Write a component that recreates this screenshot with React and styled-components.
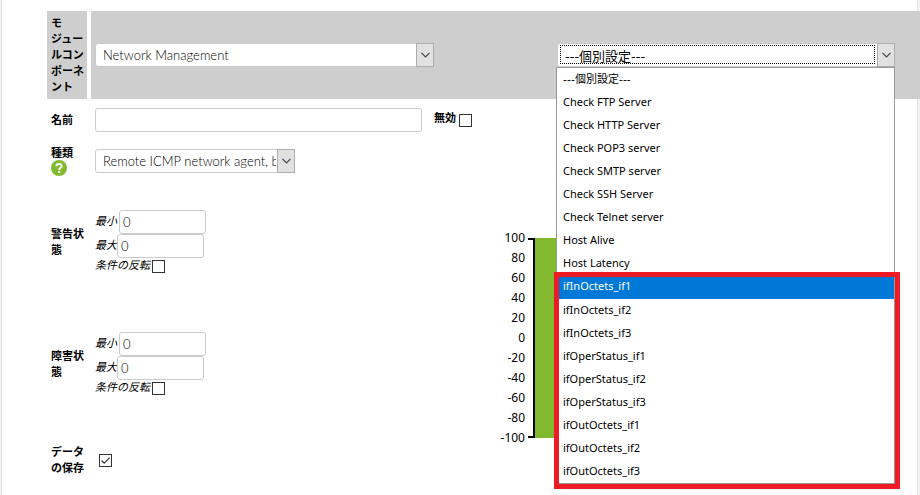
import React from 'react';
import styled, { createGlobalStyle } from 'styled-components'


const commonOptions = [
    '---個別設定---',
    'Check FTP Server',
    'Check HTTP Server',
    'Check POP3 server',
    'Check SMTP server',
    'Check SSH Server',
    'Check Telnet server',
    'Host Alive',
    'Host Latency',
]

const interfaceOptions = [
    'ifInOctets_if1',
    'ifInOctets_if2',
    'ifInOctets_if3',
    'ifOperStatus_if1',
    'ifOperStatus_if2',
    'ifOperStatus_if3',
    'ifOutOctets_if1',
    'ifOutOctets_if2',
    'ifOutOctets_if3',
]

const ticks = [100, 80, 60, 40, 20, 0, -20, -40, -60, -80, -100]

const SelectBox = ({ label, value, width, focused, ...rest }) =>{
    return(
        <SelectWrapper $width={width}>
            <Select aria-label={label} defaultValue={value} $focused={focused} {...rest}>
                <option>{value}</option>
            </Select>
            <SelectArrow>
                <svg width="9" height="6" viewBox="0 0 9 6" aria-hidden="true">
                    <path d="M0.5 0.8 L4.5 4.8 L8.5 0.8" fill="none" stroke="#444" strokeWidth="1.2" />
                </svg>
            </SelectArrow>
        </SelectWrapper>
    )
}

const ComponentList = () =>{
    return(
        <Options role="listbox" aria-label="個別設定">
            <OptionGroup role="group">
                {commonOptions.map((name, i) => (
                    <Option role="option" aria-selected={false} $placeholder={i === 0} key={name}>{name}</Option>
                ))}
            </OptionGroup>
            <OptionGroup role="group" $marked>
                {interfaceOptions.map((name, i) => (
                    <Option role="option" aria-selected={i === 0} $active={i === 0} key={name}>{name}</Option>
                ))}
            </OptionGroup>
        </Options>
    )
}

const Threshold = ({ id, title }) =>{
    return(
        <ThresholdRow>
            <Label as="div">{title}</Label>
            <ThresholdFields>
                <FieldLine $gap="2px">
                    <FieldLabel htmlFor={id + '-min'}>最小</FieldLabel>
                    <TextInput id={id + '-min'} $width="87px" defaultValue="0" />
                </FieldLine>
                <FieldLine>
                    <FieldLabel htmlFor={id + '-max'}>最大</FieldLabel>
                    <TextInput id={id + '-max'} $width="87px" defaultValue="0" />
                </FieldLine>
                <FieldLine $gap="2px" $short>
                    <FieldLabel htmlFor={id + '-inv'}>条件の反転</FieldLabel>
                    <Checkbox id={id + '-inv'} type="checkbox" />
                </FieldLine>
            </ThresholdFields>
        </ThresholdRow>
    )
}

const ThresholdChart = () =>{
    return(
        <Chart width="160" height="216" viewBox="0 0 160 216" role="img" aria-label="しきい値">
            <rect x="38" y="8" width="100" height="200" fill="#82b92e" />
            <path d="M31 9 H37 V207 H31" fill="none" stroke="#000" strokeWidth="2" />
            {ticks.map((tick, i) => (
                <text key={tick} x="28" y={12 + i * 20} textAnchor="end">{tick}</text>
            ))}
        </Chart>
    )
}

const App = () =>{
    return(
        <Page lang="ja">
            <GlobalStyle />
            <Panel>
                <Form>
                    <ComponentRow>
                        <Label as="div" $shaded>モジュールコンポーネント</Label>
                        <ComponentCell>
                            <SelectBox label="モジュールコンポーネント" value="Network Management" width="339px" />
                            <Dropdown>
                                <SelectBox label="個別設定" value="---個別設定---" width="338px" focused />
                                <ComponentList />
                            </Dropdown>
                        </ComponentCell>
                    </ComponentRow>
                    <Row $height="42px">
                        <Label htmlFor="name">名前</Label>
                        <Cell>
                            <TextInput id="name" $width="327px" />
                            <DisabledLabel htmlFor="disabled">無効</DisabledLabel>
                            <Checkbox id="disabled" type="checkbox" />
                        </Cell>
                    </Row>
                    <Row $height="40px">
                        <Label as="div">
                            種類
                            <HelpButton type="button" aria-label="ヘルプ">
                                <svg width="16" height="16" viewBox="0 0 16 16" aria-hidden="true">
                                    <circle cx="8" cy="8" r="8" fill="#82b92e" />
                                    <path d="M5.4 6.2 C5.4 3.4 10.7 3.3 10.7 6.1 C10.7 7.8 8.2 7.9 8.2 9.9" fill="none" stroke="#fff" strokeWidth="1.9" />
                                    <rect x="7.2" y="11" width="2" height="2" fill="#fff" />
                                </svg>
                            </HelpButton>
                        </Label>
                        <Cell>
                            <SelectBox label="種類" value="Remote ICMP network agent, boolean data" width="200px" />
                        </Cell>
                    </Row>
                    <Section>
                        <div>
                            <Threshold id="warning" title="警告状態" />
                            <Threshold id="critical" title="障害状態" />
                            <Row $height="70px">
                                <Label htmlFor="history">データの保存</Label>
                                <Cell $indent>
                                    <Checkbox id="history" type="checkbox" defaultChecked />
                                </Cell>
                            </Row>
                        </div>
                        <ThresholdChart />
                    </Section>
                </Form>
            </Panel>
        </Page>
    )
}

const GlobalStyle = createGlobalStyle`
    *, *::before, *::after {
        box-sizing: border-box;
    }
    body {
        margin: 0;
        background-color: #f4f4f4;
        color: #000;
        font-family: "Noto Sans", "Noto Sans CJK JP", sans-serif;
        font-size: 11px;
        line-height: 16px;
        overflow-x: hidden;
    }
    input, select, button {
        font-family: Lato, "Noto Sans CJK JP", sans-serif;
        font-size: 13px;
        font-weight: 300;
        color: #000;
    }
`

const Page = styled.div`
    min-height: 100vh;
    padding: 0 2px 0 1px;
    display: flex;
`

const Panel = styled.main`
    flex: 1;
    min-width: 0;
    background-color: #fff;
    border: solid #e2e2e2;
    border-width: 0 1px;
`

const Form = styled.form`
    padding: 11px 0 0 45px;
`

const Row = styled.div`
    display: grid;
    grid-template-columns: 40px 1fr;
    column-gap: 4px;
    align-items: center;
    min-height: ${props => props.$height};
`

const ComponentRow = styled(Row)`
    align-items: stretch;
    min-height: 88px;
    margin-right: -3px;
`

const ThresholdRow = styled(Row)`
    min-height: 122px;
`

const Label = styled.label`
    padding: 3px 0 5px 4px;
    font-weight: 700;
    font-family: "Noto Sans CJK JP", sans-serif;
    line-break: strict;
    background-color: ${props => props.$shaded ? '#cecece' : 'transparent'};
`

const ComponentCell = styled.div`
    display: grid;
    grid-template-columns: 14fr 11fr;
    align-items: center;
    padding-left: 4px;
    background-color: #cecece;
`

const Cell = styled.div`
    display: flex;
    align-items: center;
    padding-left: ${props => props.$indent ? '8px' : '4px'};
`

const Section = styled.div`
    display: grid;
    grid-template-columns: 450px 1fr;
`

const SelectWrapper = styled.div`
    position: relative;
    display: flex;
    width: ${props => props.$width};
    max-width: 100%;
`

const Select = styled.select`
    appearance: none;
    width: 100%;
    height: 24px;
    padding: 0 18px 0 7px;
    border: 1px solid #cbcbcb;
    border-radius: 3px;
    background-color: #fff;
    outline: none;
    ${props => props.$focused && `
        padding-top: 2px;
        font-family: "DejaVu Sans", "Noto Sans CJK JP", sans-serif;
        font-weight: 400;
    `}
`

const SelectArrow = styled.span`
    position: absolute;
    top: 0;
    right: 0;
    bottom: 0;
    width: 18px;
    display: flex;
    align-items: center;
    justify-content: center;
    border: 1px solid #adadad;
    background-color: #e1e1e1;
    pointer-events: none;
`

const Dropdown = styled.div`
    position: relative;

    /* dotted focus ring */
    &::before {
        content: '';
        position: absolute;
        z-index: 1;
        top: 2px;
        left: 3px;
        width: 315px;
        height: 19px;
        border: 1px dotted #000;
        pointer-events: none;
    }
`

const Options = styled.div`
    position: absolute;
    z-index: 2;
    top: 100%;
    left: -1px;
    width: 339px;
    border: 1px solid #999;
    background-color: #fff;
`

const OptionGroup = styled.div`
    position: relative;

    ${props => props.$marked && `
        &::after {
            content: '';
            position: absolute;
            inset: -3px -6px -6px -3px;
            border: 5px solid #ed1c24;
            pointer-events: none;
        }
    `}
`

const Option = styled.div`
    height: ${props => props.$active ? '24px' : '23px'};
    padding-left: 6px;
    line-height: 21px;
    white-space: nowrap;
    color: ${props => props.$active ? '#fff' : '#000'};
    background-color: ${props => props.$active ? '#0078d7' : '#fff'};
    ${props => props.$placeholder && `
        font-family: "DejaVu Sans", "Noto Sans CJK JP", sans-serif;
        line-height: 23px;
    `}
`

const TextInput = styled.input`
    width: ${props => props.$width};
    height: 24px;
    padding: 0 3px;
    border: 1px solid #cbcbcb;
    border-radius: 3px;
    background-color: #fff;
`

const Checkbox = styled.input`
    appearance: none;
    flex: none;
    width: 13px;
    height: 13px;
    margin: 0;
    border: 1px solid #333;
    background-color: #fff;

    &:checked {
        background-image: url("data:image/svg+xml,%3Csvg xmlns='http://www.w3.org/2000/svg' viewBox='0 0 11 11'%3E%3Cpath d='M1.5 5.5L4.2 8.2L9.7 2.7' fill='none' stroke='%23333' stroke-width='1.2'/%3E%3C/svg%3E");
    }
`

const DisabledLabel = styled.label`
    margin: 0 3px 0 12px;
    padding-bottom: 4px;
    font-weight: 700;
`

const HelpButton = styled.button`
    display: block;
    width: 16px;
    height: 16px;
    padding: 0;
    border: none;
    background: none;
    line-height: 0;
    cursor: pointer;
`

const ThresholdFields = styled.div`
    padding-left: 4px;
`

const FieldLine = styled.div`
    display: flex;
    align-items: center;
    gap: ${props => props.$gap || '0'};
    height: ${props => props.$short ? '17px' : '24px'};
`

const FieldLabel = styled.label`
    padding-bottom: 2px;
    font-style: italic;
`

const Chart = styled.svg`
    margin-top: 49px;

    text {
        font-size: 12px;
    }
`

export default App;
